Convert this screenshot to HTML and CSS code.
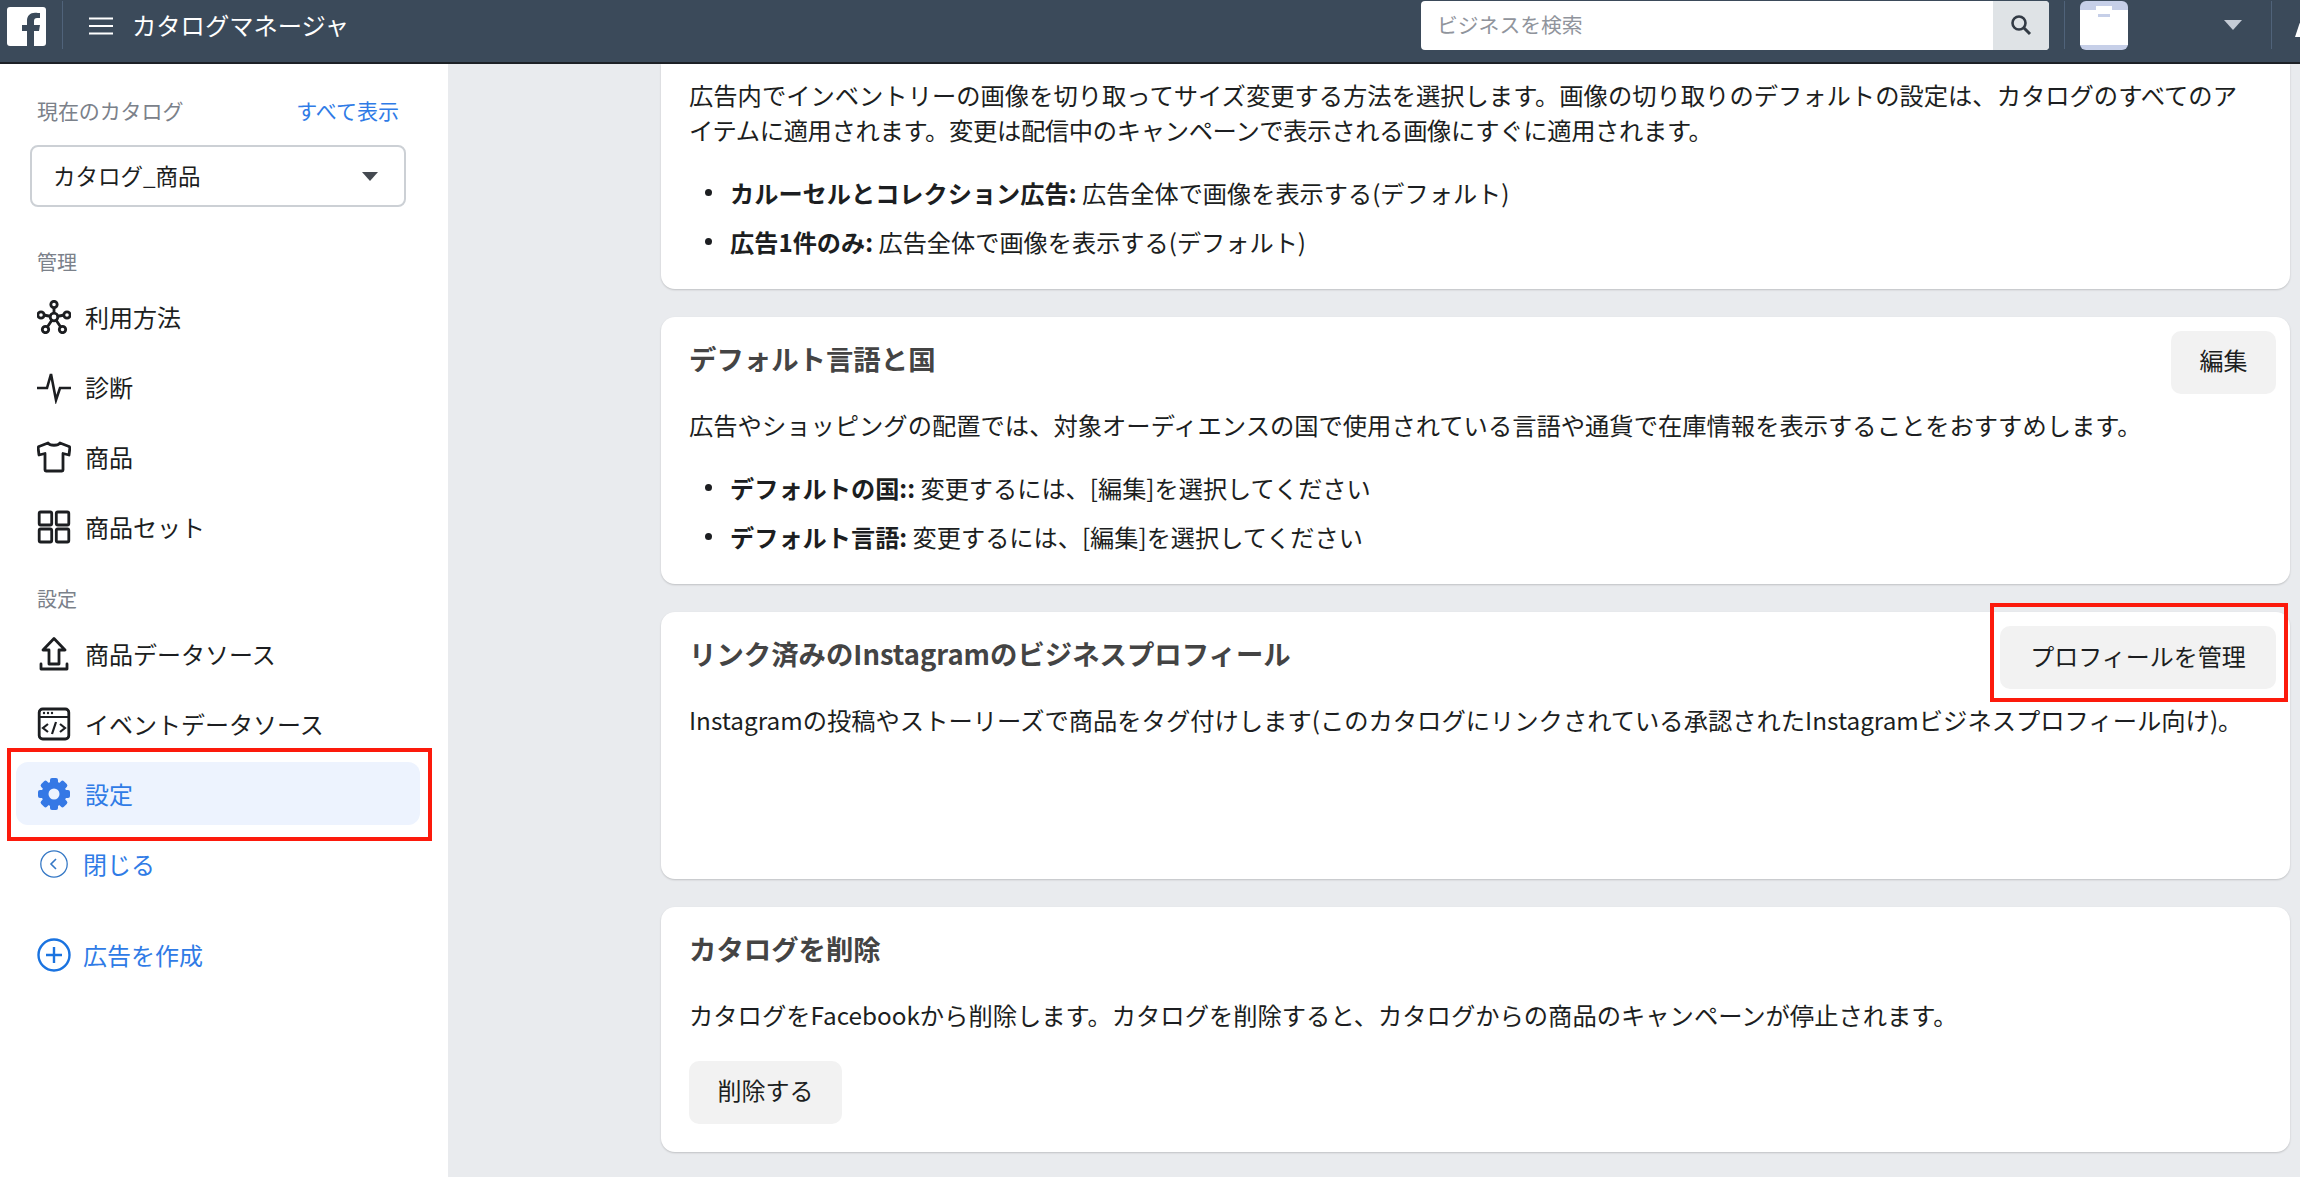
FILE: index.html
```html
<!DOCTYPE html>
<html lang="ja">
<head>
<meta charset="utf-8">
<title>カタログマネージャ</title>
<link rel="stylesheet" href="styles.css">
</head>
<body>
<header class="topbar">
  <svg class="fb-logo" viewBox="0 0 39 39"><rect width="39" height="39" rx="3" fill="#fff"/><path d="M27 39V24h5l1-6h-6v-4c0-2 1-3 3-3h3V6c-1 0-3-.3-5-.3-5 0-8 3-8 8V18h-5v6h5v15z" fill="#3b4a5a"/></svg>
  <span class="bar-divider first"></span>
  <svg class="hamburger" viewBox="0 0 24 18"><path d="M0 1.500h24M0 9h24M0 16.500h24" stroke="#fff" stroke-width="2"/></svg>
  <span class="app-title">カタログマネージャ</span>
  <div class="search">
    <span class="search-input">ビジネスを検索</span>
    <span class="search-btn"><svg viewBox="0 0 22 22" class="search-icon"><circle cx="9" cy="9" r="6.500" fill="none" stroke="#333b45" stroke-width="2.600"/><path d="M14 14l6 6" stroke="#333b45" stroke-width="3"/></svg></span>
  </div>
  <span class="bar-divider second"></span>
  <span class="avatar"><svg viewBox="0 0 48 49"><rect width="48" height="49" rx="6" fill="#c6cfe8"/><path d="M0 9h48v35H0z" fill="#fff"/><path d="M16 5h16v5H16z" fill="#fff"/><path d="M18 13h12v3H18z" fill="#c6cfe8"/></svg></span>
  <span class="caret-light"></span>
  <span class="bar-divider third"></span>
  <svg class="edge-icon" viewBox="0 0 12 24"><path d="M0 22 L4 10 C5 6 8 5 12 5 V22z" fill="#fff"/></svg>
</header>
<div class="layout">
  <aside class="sidebar">
    <div class="current-row"><span class="muted">現在のカタログ</span><a class="link">すべて表示</a></div>
    <div class="select"><span>カタログ_商品</span><span class="caret-dark"></span></div>
    <div class="section-label first-label">管理</div>
    <nav class="nav">
      <div class="nav-row"><svg class="icon" viewBox="0 0 34 34" fill="none" stroke="#1c1e21" stroke-width="2.800"><path d="M17 17V7M17 17L6.500 15M17 17l10.500-2M17 17l-7 10.500M17 17l7 10.500"/><circle cx="17" cy="4.500" r="3.200" fill="#fff"/><circle cx="4" cy="15" r="3.200" fill="#fff"/><circle cx="30" cy="15" r="3.200" fill="#fff"/><circle cx="8.500" cy="29.500" r="3.200" fill="#fff"/><circle cx="25.500" cy="29.500" r="3.200" fill="#fff"/><circle cx="17" cy="17" r="3.800" fill="#fff"/></svg><span>利用方法</span></div>
      <div class="nav-row"><svg class="icon" viewBox="0 0 34 34" fill="none" stroke="#1c1e21" stroke-width="2.600"><path d="M0 18h10l4-14 5 26 4-12h11"/></svg><span>診断</span></div>
      <div class="nav-row"><svg class="icon" viewBox="0 0 34 34" fill="none" stroke="#1c1e21" stroke-width="2.800" stroke-linejoin="round"><path d="M11 3c2 3 10 3 12 0l9 3.500c.8.500 1 1 .8 2L32 15l-6-1.500V30a1 1 0 0 1-1 1H9a1 1 0 0 1-1-1V13.500L2 15 1.200 8.500c-.2-1 0-1.500.8-2z"/></svg><span>商品</span></div>
      <div class="nav-row"><svg class="icon" viewBox="0 0 34 34" fill="none" stroke="#1c1e21" stroke-width="2.800"><rect x="2.200" y="2" width="12.500" height="13" rx="1.500"/><rect x="19.300" y="2" width="12.500" height="13" rx="1.500"/><rect x="2.200" y="19" width="12.500" height="13" rx="1.500"/><rect x="19.300" y="19" width="12.500" height="13" rx="1.500"/></svg><span>商品セット</span></div>
    </nav>
    <div class="section-label">設定</div>
    <nav class="nav second-nav">
      <div class="nav-row"><svg class="icon" viewBox="0 0 34 34" fill="none" stroke="#1c1e21" stroke-width="2.800" stroke-linejoin="round"><path d="M17 1.500 28 13h-6v14H12V13H6z"/><path d="M4 27v5h26v-5" stroke-linecap="round"/></svg><span>商品データソース</span></div>
      <div class="nav-row"><svg class="icon" viewBox="0 0 34 34" fill="none" stroke="#1c1e21" stroke-width="2.800"><rect x="2.200" y="2" width="29.600" height="30" rx="3.500"/><path d="M2.500 10h29" stroke-width="2"/><path d="M11 17l-5 4 5 4M23 17l5 4-5 4M19 15l-4 12" stroke-width="2.200"/><circle cx="7" cy="6" r="1.200" fill="#1c1e21" stroke="none"/><circle cx="11" cy="6" r="1.200" fill="#1c1e21" stroke="none"/><circle cx="15" cy="6" r="1.200" fill="#1c1e21" stroke="none"/></svg><span>イベントデータソース</span></div>
      <div class="nav-row active"><svg class="icon" viewBox="0 0 34 34"><g fill="#3578e5"><circle cx="17" cy="17" r="12.500"/><rect x="13" y="1" width="8" height="32" rx="2"/><rect x="13" y="1" width="8" height="32" rx="2" transform="rotate(45 17 17)"/><rect x="13" y="1" width="8" height="32" rx="2" transform="rotate(90 17 17)"/><rect x="13" y="1" width="8" height="32" rx="2" transform="rotate(135 17 17)"/></g><circle cx="17" cy="17" r="5.500" fill="#edf3fe"/></svg><span>設定</span></div>
      <div class="nav-row link-row"><svg class="icon close-icon" viewBox="0 0 28 28" fill="none" stroke="#3578c5" stroke-width="1.300"><circle cx="14" cy="14" r="13.200"/><path d="M16 9l-5 5 5 5" stroke-width="1.600"/></svg><span>閉じる</span></div>
    </nav>
    <div class="nav-row link-row create"><svg class="icon" viewBox="0 0 34 34" fill="none" stroke="#1a73e0" stroke-width="2.400"><circle cx="17" cy="17" r="15.500"/><path d="M9 17h16M17 9v16"/></svg><span>広告を作成</span></div>
  </aside>
  <main class="content">
    <section class="card crop-card">
      <p class="text">広告内でインベントリーの画像を切り取ってサイズ変更する方法を選択します。画像の切り取りのデフォルトの設定は、カタログのすべてのア<br><span class="tight">イテムに適用されます。変更は配信中のキャンペーンで表示される画像にすぐに適用されます。</span></p>
      <ul class="bullets">
        <li><b>カルーセルとコレクション広告:</b> 広告全体で画像を表示する(デフォルト)</li>
        <li><b>広告1件のみ:</b> 広告全体で画像を表示する(デフォルト)</li>
      </ul>
    </section>
    <section class="card">
      <div class="card-head"><h2>デフォルト言語と国</h2><button class="btn">編集</button></div>
      <p class="text">広告やショッピングの配置では、対象オーディエンスの国で使用されている言語や通貨で在庫情報を表示することをおすすめします。</p>
      <ul class="bullets pad-bottom">
        <li><b>デフォルトの国::</b> 変更するには、[編集]を選択してください</li>
        <li><b>デフォルト言語:</b> 変更するには、[編集]を選択してください</li>
      </ul>
    </section>
    <section class="card tall-card">
      <div class="card-head"><h2>リンク済みのInstagramのビジネスプロフィール</h2><button class="btn profile-btn">プロフィールを管理</button></div>
      <p class="text">Instagramの投稿やストーリーズで商品をタグ付けします(このカタログにリンクされている承認されたInstagramビジネスプロフィール向け)。</p>
    </section>
    <section class="card">
      <div class="card-head"><h2>カタログを削除</h2></div>
      <p class="text">カタログをFacebookから削除します。カタログを削除すると、カタログからの商品のキャンペーンが停止されます。</p>
      <button class="btn delete-btn">削除する</button>
    </section>
  </main>
</div>
<div class="highlight hl-nav"></div>
<div class="highlight hl-profile"></div>
</body>
</html>
```
FILE: styles.css
```css
* { box-sizing: border-box; }
html, body { margin: 0; height: 1177px; overflow: hidden; }
body {
  font-family: "Noto Sans CJK JP", "Noto Sans", sans-serif;
  color: #1c1e21;
  background: #e9ebee;
  position: relative;
}
.topbar {
  height: 64px;
  background: #3b4a5a;
  border-bottom: 2px solid #1d2126;
  display: flex;
  align-items: center;
  overflow: hidden;
}
.fb-logo { width: 39px; height: 39px; margin-left: 7px; margin-top: -9px; flex: none; }
.bar-divider { width: 1px; height: 48px; background: #50637a; flex: none; margin-top: -12px; }
.bar-divider.first { margin-left: 16px; }
.bar-divider.second { margin-left: 15px; }
.bar-divider.third { margin-left: 29px; }
.hamburger { width: 24px; height: 18px; margin-left: 26px; margin-top: -10px; flex: none; }
.app-title { color: #fff; font-size: 24.300px; line-height: 30px; margin-left: 19px; margin-top: -12px; width: 1289px; flex: none; white-space: nowrap; }
.search {
  width: 628px; height: 49px; margin-top: -12px; background: #fff; border-radius: 4px;
  display: flex; overflow: hidden; flex: none;
}
.search-input { flex: 1; color: #90949c; font-size: 20.800px; line-height: 47px; padding-left: 16px; }
.search-btn { width: 56px; background: #dfe3e6; display: flex; align-items: center; justify-content: center; }
.search-icon { width: 22px; height: 22px; }
.avatar { width: 48px; height: 49px; margin-left: 15px; margin-top: -12px; flex: none; }
.avatar svg { display: block; width: 48px; height: 49px; }
.caret-light {
  width: 0; height: 0; margin-left: 96px; margin-top: -12px; flex: none;
  border-left: 9px solid transparent; border-right: 9px solid transparent; border-top: 10px solid #c5ccd6;
}
.edge-icon { width: 12px; height: 24px; margin-left: 23px; margin-top: -8px; flex: none; }

.layout { display: flex; height: 1113px; }
.sidebar { width: 448px; flex: none; background: #fff; padding-top: 31px; }
.current-row { display: flex; justify-content: space-between; padding: 0 49px 0 37px; font-size: 21px; line-height: 30px; }
.muted { color: #7b818a; letter-spacing: -.1px; }
.link { color: #2f7be6; }
.select {
  margin: 20px 0 0 30px; width: 376px; height: 62px; padding: 0 26px 3px 21px;
  border: 2px solid #ccd0d5; border-radius: 8px;
  display: flex; align-items: center; justify-content: space-between;
  font-size: 22.500px; color: #1c1e21;
}
.caret-dark {
  width: 0; height: 0; margin-top: 3px;
  border-left: 8px solid transparent; border-right: 8px solid transparent; border-top: 9px solid #444950;
}
.section-label { font-size: 20px; line-height: 30px; color: #7b818a; padding-left: 37px; margin-top: 26px; }
.first-label { margin-top: 40px; }
.nav { display: flex; flex-direction: column; gap: 7px; margin-top: 8px; }
.second-nav { margin-top: 8px; }
.nav-row {
  height: 63px; margin: 0 28px 0 16px; padding-left: 21px; border-radius: 12px;
  display: flex; align-items: center; font-size: 24px; color: #1c1e21;
}
.icon { width: 34px; height: 34px; margin-right: 14px; flex: none; }
.active { background: #edf3fe; color: #2f7be6; }
.link-row { color: #2f7be6; }
.close-icon { width: 28px; height: 28px; margin: 0 15px 0 3px; }
.create { margin-top: 28px; }
.create .icon { margin-right: 12px; }

.content { flex: 1; padding: 0 10px 0 213px; display: flex; flex-direction: column; gap: 28px; }
.card {
  background: #fff; border-radius: 14px; box-shadow: 0 1px 2px rgba(0,0,0,.18);
  padding: 14px 14px 0 28px; flex: none;
}
.crop-card { padding-top: 13px; border-radius: 0 0 14px 14px; height: 225px; }
.tall-card { height: 267px; }
.card-head { display: flex; align-items: center; justify-content: space-between; min-height: 63px; }
h2 { margin: -9px 0 0; font-size: 27.400px; line-height: 36px; font-weight: 700; color: #444; }
.btn {
  font: inherit; font-size: 24px; color: #1c1e21; background: #f2f2f2; border: 0; border-radius: 10px;
  height: 63px; width: 105px; padding: 0 0 7px;
}
.profile-btn { width: 276px; padding-bottom: 5px; }
.delete-btn { width: 153px; margin: 29px 0 28px; display: block; }
.text { margin: 13px 0 0; font-size: 24.300px; line-height: 35px; white-space: nowrap; }
.crop-card .text { margin-top: 0; }
.tight { letter-spacing: -.33px; }
.bullets { list-style: none; margin: 21px 0 0; padding: 0 0 0 14px; font-size: 24.200px; line-height: 49px; }
.pad-bottom { padding-bottom: 23px; }
.bullets li { position: relative; padding-left: 27px; white-space: nowrap; }
.bullets li::before {
  content: ""; position: absolute; left: 2px; top: 21px; width: 7px; height: 7px; border-radius: 50%; background: #1c1e21;
}
.highlight { position: absolute; border: 4px solid #fc1a0c; pointer-events: none; }
.hl-nav { left: 7px; top: 748px; width: 425px; height: 93px; }
.hl-profile { left: 1990px; top: 603px; width: 298px; height: 99px; }
```
